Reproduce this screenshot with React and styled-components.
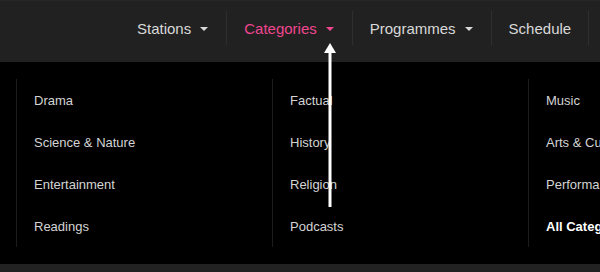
import React from "react";
import styled, { createGlobalStyle } from "styled-components";

const GlobalStyle = createGlobalStyle`
  html, body {
    margin: 0;
    padding: 0;
    background: #000;
    font-family: "Liberation Sans", Arial, sans-serif;
  }
`;

const Page = styled.div`
  position: relative;
  width: 600px;
  height: 272px;
  overflow: hidden;
  background: #000;
  display: flex;
  flex-direction: column;
`;

const TopBar = styled.nav`
  height: 62px;
  flex: none;
  background: #212121;
  border-top: 1px solid #262626;
  box-sizing: border-box;
  display: flex;
  align-items: center;
  padding-left: 120px;
`;

const NavItem = styled.div`
  display: flex;
  align-items: center;
  height: 34px;
  padding: 0 17px;
  border-right: 1px solid #2e2e2e;
  margin-top: -7px;
  font-size: 15px;
  color: ${(p) => (p.active ? "#f0468f" : "#d9d9d9")};
  white-space: nowrap;
  flex: none;
`;

const Caret = styled.span`
  width: 0;
  height: 0;
  margin-left: 9px;
  margin-right: 1px;
  margin-top: 2px;
  border-left: 4px solid transparent;
  border-right: 4px solid transparent;
  border-top: 4px solid ${(p) => (p.active ? "#f0468f" : "#d9d9d9")};
`;

const Dropdown = styled.div`
  flex: 1;
  background: #000;
  display: flex;
  padding: 17px 0 17px 16px;
`;

const Column = styled.ul`
  list-style: none;
  margin: 0;
  padding: 0 0 0 17px;
  width: 256px;
  flex: none;
  box-sizing: border-box;
  border-left: 1px solid #1c1c1c;
  display: flex;
  flex-direction: column;
`;

const Link = styled.li`
  height: 42px;
  display: flex;
  align-items: center;
  font-size: 13px;
  color: ${(p) => (p.bold ? "#fff" : "#d4d4d4")};
  font-weight: ${(p) => (p.bold ? 700 : 400)};
  white-space: nowrap;
`;

const Footer = styled.div`
  height: 8px;
  flex: none;
  background: #222;
`;

const Pointer = styled.svg`
  position: absolute;
  left: 322px;
  top: 42px;
`;

const navItems = [
  { label: "Stations", caret: true },
  { label: "Categories", caret: true, active: true },
  { label: "Programmes", caret: true },
  { label: "Schedule" },
  { label: "" },
];

const columns = [
  [{ label: "Drama" }, { label: "Science & Nature" }, { label: "Entertainment" }, { label: "Readings" }],
  [{ label: "Factual" }, { label: "History" }, { label: "Religion" }, { label: "Podcasts" }],
  [{ label: "Music" }, { label: "Arts & Culture" }, { label: "Performance" }, { label: "All Categories", bold: true }],
];

export default function App() {
  return (
    <Page>
      <GlobalStyle />
      <TopBar>
        {navItems.map((item, i) => (
          <NavItem key={i} active={item.active}>
            {item.label}
            {item.caret && <Caret active={item.active} />}
          </NavItem>
        ))}
      </TopBar>
      <Dropdown>
        {columns.map((col, i) => (
          <Column key={i}>
            {col.map((l) => (
              <Link key={l.label} bold={l.bold}>
                {l.label}
              </Link>
            ))}
          </Column>
        ))}
      </Dropdown>
      <Footer />
      <Pointer width="16" height="166" viewBox="0 0 16 166">
        <polygon points="8,1 14,11 2,11" fill="#fff" />
        <rect x="6.5" y="10" width="3" height="155" fill="#fff" />
      </Pointer>
    </Page>
  );
}
